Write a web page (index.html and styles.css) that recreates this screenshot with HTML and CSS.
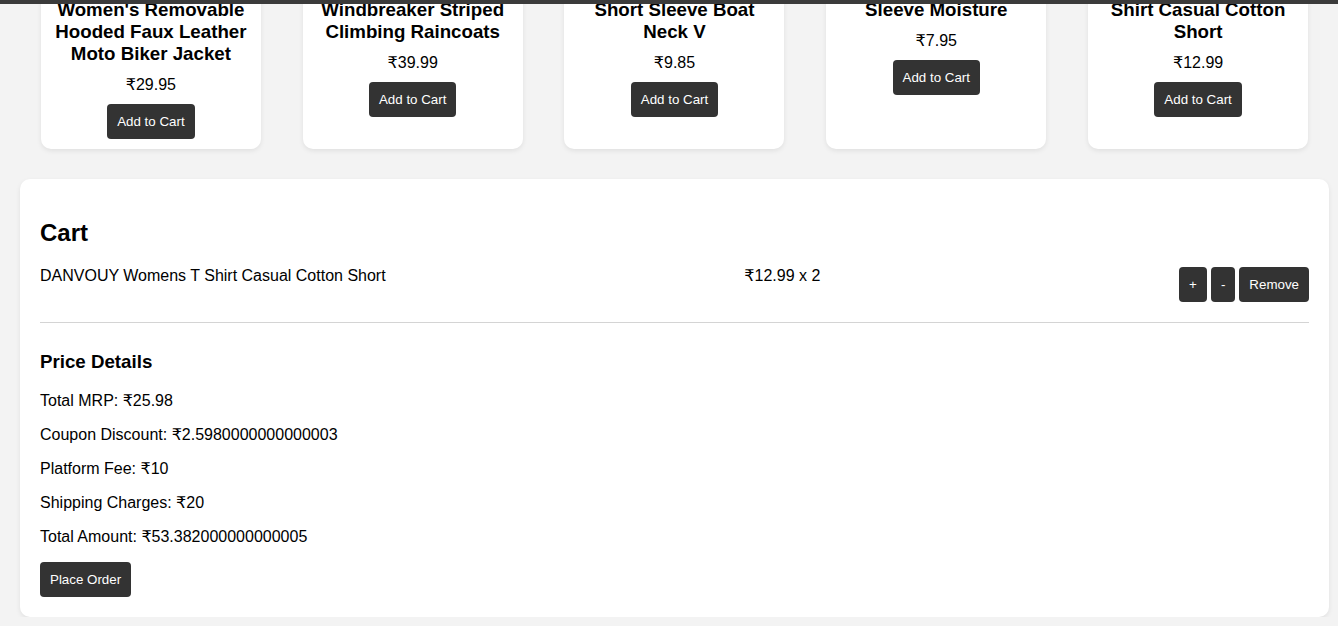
FILE: index.html
```html
<!DOCTYPE html>
<html lang="en">
<head>
<meta charset="utf-8">
<title>Shop</title>
<link rel="stylesheet" href="styles.css">
</head>
<body>
<div class="topbar"></div>
<main class="container">
  <section class="products">
    <div class="card">
      <h3 class="card-title">Lock and Love Women's Removable Hooded Faux Leather Moto Biker Jacket</h3>
      <p class="card-price">₹29.95</p>
      <button class="btn">Add to Cart</button>
    </div>
    <div class="card">
      <h3 class="card-title">Rain Jacket Women Windbreaker Striped Climbing Raincoats</h3>
      <p class="card-price">₹39.99</p>
      <button class="btn">Add to Cart</button>
    </div>
    <div class="card">
      <h3 class="card-title">MBJ Women's Solid Short Sleeve Boat Neck V</h3>
      <p class="card-price">₹9.85</p>
      <button class="btn">Add to Cart</button>
    </div>
    <div class="card">
      <h3 class="card-title">Opna Women's Short Sleeve Moisture</h3>
      <p class="card-price">₹7.95</p>
      <button class="btn">Add to Cart</button>
    </div>
    <div class="card">
      <h3 class="card-title">DANVOUY Womens T Shirt Casual Cotton Short</h3>
      <p class="card-price">₹12.99</p>
      <button class="btn">Add to Cart</button>
    </div>
  </section>

  <section class="cart">
    <h2 class="cart-title">Cart</h2>
    <div class="cart-item">
      <span class="item-name">DANVOUY Womens T Shirt Casual Cotton Short</span>
      <span class="item-price">₹12.99 x 2</span>
      <div class="item-actions">
        <button class="btn">+</button>
        <button class="btn">-</button>
        <button class="btn">Remove</button>
      </div>
    </div>
    <div class="price-details">
      <h3 class="details-title">Price Details</h3>
      <p class="detail">Total MRP: ₹25.98</p>
      <p class="detail">Coupon Discount: ₹2.5980000000000003</p>
      <p class="detail">Platform Fee: ₹10</p>
      <p class="detail">Shipping Charges: ₹20</p>
      <p class="detail">Total Amount: ₹53.382000000000005</p>
      <button class="btn">Place Order</button>
    </div>
  </section>
</main>
</body>
</html>
```
FILE: styles.css
```css
html, body {
  margin: 0;
  padding: 0;
}
body {
  background: #f3f3f3;
  font-family: "Liberation Sans", Arial, "DejaVu Sans", sans-serif;
  color: #000;
  overflow: hidden;
}
.topbar {
  position: fixed;
  top: 0;
  left: 0;
  right: 0;
  height: 4px;
  background: #3b3b3b;
  z-index: 10;
}
.container {
  width: 1309px;
  margin-left: 20px;
}
.products {
  display: flex;
  justify-content: space-around;
  align-items: stretch;
  margin-top: -43px;
}
.card {
  width: 200px;
  padding: 10px;
  background: #fff;
  border-radius: 10px;
  box-shadow: 0 2px 5px rgba(0, 0, 0, 0.08);
  text-align: center;
}
.card-title {
  font-size: 18.72px;
  font-weight: bold;
  margin: 10px 0;
}
.card-price {
  font-size: 16px;
  margin: 10px 0;
}
.btn {
  font-family: "Liberation Sans", Arial, sans-serif;
  font-size: 13.33px;
  background: #333;
  color: #fff;
  border: none;
  border-radius: 4px;
  padding: 10px;
  line-height: 15px;
  cursor: pointer;
}
.card .btn {
  display: block;
  margin: 0 auto;
}
.cart {
  margin-top: 30px;
  background: #fff;
  border-radius: 10px;
  box-shadow: 0 2px 5px rgba(0, 0, 0, 0.08);
  padding: 20px;
}
.cart-title {
  font-size: 24px;
  margin: 20px 0;
}
.cart-item {
  display: flex;
  justify-content: space-between;
  align-items: flex-start;
  font-size: 16px;
  line-height: 18px;
  padding-bottom: 20px;
  border-bottom: 1px solid #d4d4d4;
}
.item-actions {
  display: flex;
  gap: 4px;
}
.price-details {
  padding-top: 9px;
}
.details-title {
  font-size: 18.72px;
  margin: 18.72px 0 19.6px;
}
.detail {
  font-size: 16px;
  line-height: 18px;
  margin: 16px 0;
}
```
